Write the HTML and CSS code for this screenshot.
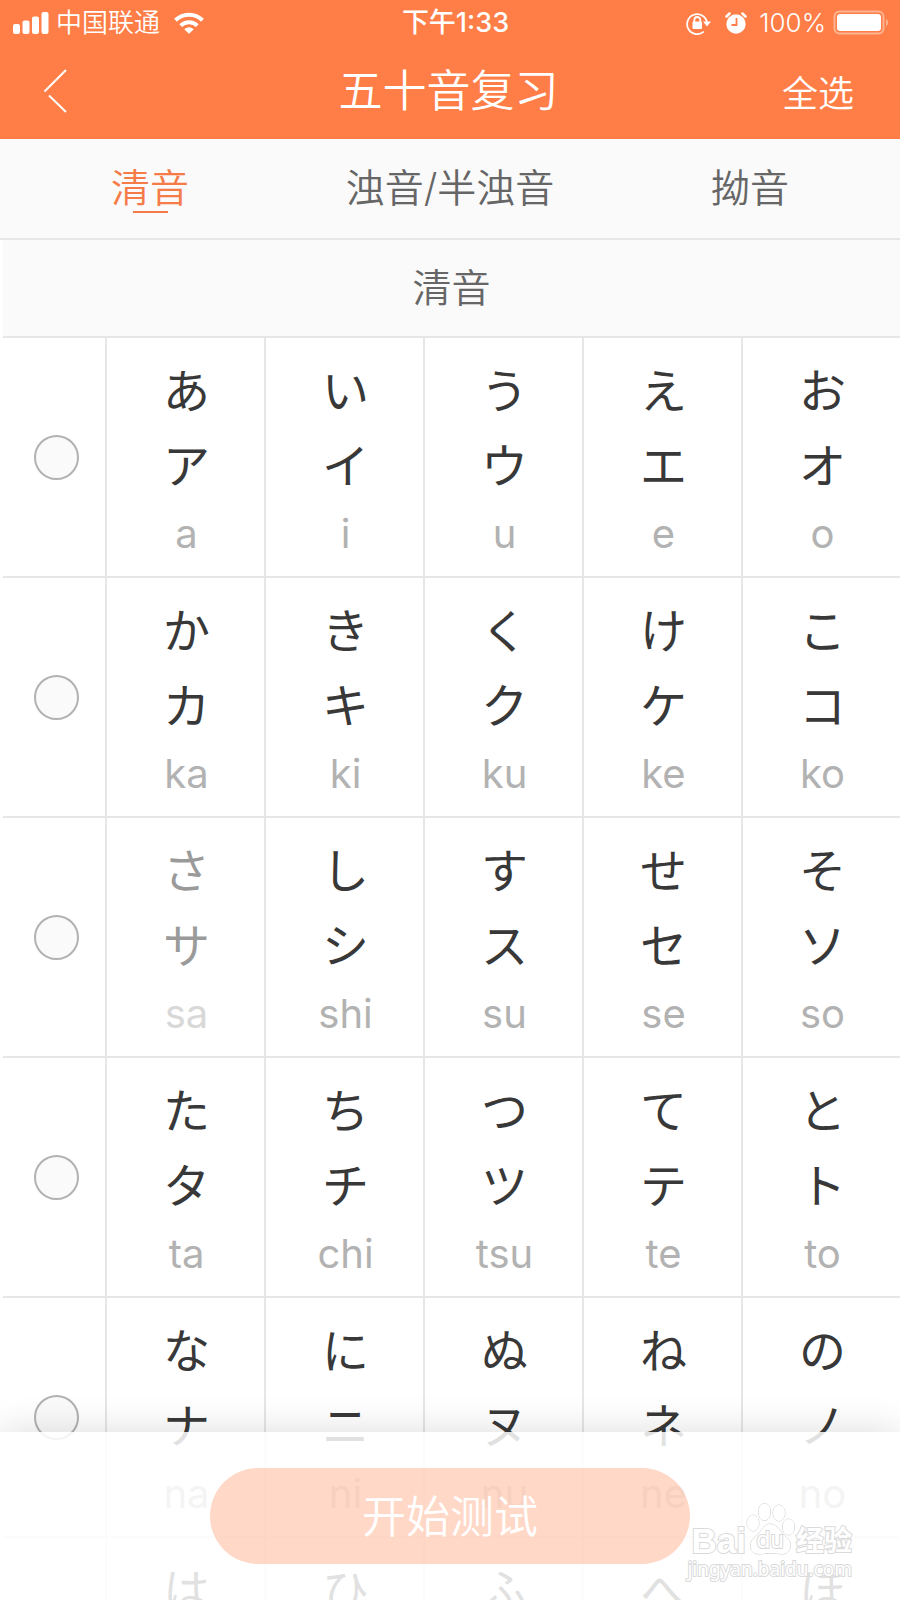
FILE: index.html
```
<!DOCTYPE html>
<html lang="zh-CN">
<head>
<meta charset="utf-8">
<meta name="viewport" content="width=device-width, initial-scale=1">
<title>五十音复习</title>
<link rel="stylesheet" href="styles.css">
</head>
<body>
<div class="screen">
  <header class="header">
    <div class="status">
      <div class="status-left">
        <svg class="icon" width="36" height="22" viewBox="0 0 36 22" fill="currentColor" aria-hidden="true">
          <rect x="0" y="12" width="7" height="10" rx="2"/><rect x="9.500" y="8.500" width="7" height="13.500" rx="2"/><rect x="19" y="4.500" width="7" height="17.500" rx="2"/><rect x="28.500" y="0" width="7" height="22" rx="2"/>
        </svg>
        <span class="carrier">中国联通</span>
        <svg class="icon wifi" width="30" height="22" viewBox="0 0 30 22" aria-hidden="true">
          <g fill="none" stroke="currentColor" stroke-width="4"><path d="M1.500 8.300a19.300 19.300 0 0 1 27 0"/><path d="M6.700 13.600a12 12 0 0 1 16.600 0"/></g>
          <path d="M15 21.800l-4.800-4.600q4.800-3.800 9.600 0z" fill="currentColor"/>
        </svg>
      </div>
      <span class="clock">下午1:33</span>
      <div class="status-right">
        <svg class="icon" width="25" height="23" viewBox="0 0 25 23" aria-hidden="true">
          <path d="M17.800 19.600A10 10 0 1 1 21 10.500" fill="none" stroke="currentColor" stroke-width="1.800"/>
          <path d="M17 9.500h8l-4 5z" fill="currentColor"/>
          <rect x="6.500" y="9.500" width="9.500" height="7.500" rx="1" fill="currentColor"/>
          <path d="M8.300 10V8a3 3 0 0 1 6 0v2" fill="none" stroke="currentColor" stroke-width="1.800"/>
        </svg>
        <svg class="icon alarm" width="22" height="22" viewBox="0 0 22 22" aria-hidden="true">
          <circle cx="11" cy="12" r="9.700" fill="currentColor"/>
          <path d="M1.500 4.500l3-3M20.500 4.500l-3-3" stroke="currentColor" stroke-width="2.500" stroke-linecap="round"/>
          <path d="M11.500 6v7H6.500" fill="none" stroke="#ff7d46" stroke-width="1.800"/>
        </svg>
        <span class="percent">100%</span>
        <svg class="icon battery" width="57" height="26" viewBox="0 0 57 26" aria-hidden="true">
          <rect x="1.500" y="1.500" width="49" height="22" rx="5" fill="none" stroke="#ffb491" stroke-width="2"/>
          <rect x="4" y="4" width="44" height="17" rx="3" fill="currentColor"/>
          <path d="M53 8.500q4 4 0 8z" fill="#ffb491"/>
        </svg>
      </div>
    </div>
    <div class="navbar">
      <button class="back" type="button" aria-label="返回">
        <svg class="icon" width="24" height="44" viewBox="0 0 24 44" fill="none" stroke="currentColor" stroke-width="2" aria-hidden="true"><path d="M23 1L1.500 22.500M6 26.500L23 43"/></svg>
      </button>
      <h1 class="title">五十音复习</h1>
      <button class="select-all" type="button">全选</button>
    </div>
  </header>

  <nav class="tabs">
    <button class="tab tab-active" type="button">清音</button>
    <button class="tab" type="button">浊音/半浊音</button>
    <button class="tab" type="button">拗音</button>
  </nav>

  <main class="content">
    <h2 class="section">清音</h2>
    <table class="kana">
      <colgroup><col class="col-check"><col><col><col><col><col></colgroup>
      <tbody>
        <tr>
          <td class="pick"><input class="check" type="checkbox" aria-label="あ行"></td>
          <td><span>あ</span><span>ア</span><small>a</small></td>
          <td><span>い</span><span>イ</span><small>i</small></td>
          <td><span>う</span><span>ウ</span><small>u</small></td>
          <td><span>え</span><span>エ</span><small>e</small></td>
          <td><span>お</span><span>オ</span><small>o</small></td>
        </tr>
        <tr>
          <td class="pick"><input class="check" type="checkbox" aria-label="か行"></td>
          <td><span>か</span><span>カ</span><small>ka</small></td>
          <td><span>き</span><span>キ</span><small>ki</small></td>
          <td><span>く</span><span>ク</span><small>ku</small></td>
          <td><span>け</span><span>ケ</span><small>ke</small></td>
          <td><span>こ</span><span>コ</span><small>ko</small></td>
        </tr>
        <tr>
          <td class="pick"><input class="check" type="checkbox" aria-label="さ行"></td>
          <td class="pressed"><span>さ</span><span>サ</span><small>sa</small></td>
          <td><span>し</span><span>シ</span><small>shi</small></td>
          <td><span>す</span><span>ス</span><small>su</small></td>
          <td><span>せ</span><span>セ</span><small>se</small></td>
          <td><span>そ</span><span>ソ</span><small>so</small></td>
        </tr>
        <tr>
          <td class="pick"><input class="check" type="checkbox" aria-label="た行"></td>
          <td><span>た</span><span>タ</span><small>ta</small></td>
          <td><span>ち</span><span>チ</span><small>chi</small></td>
          <td><span>つ</span><span>ツ</span><small>tsu</small></td>
          <td><span>て</span><span>テ</span><small>te</small></td>
          <td><span>と</span><span>ト</span><small>to</small></td>
        </tr>
        <tr>
          <td class="pick"><input class="check" type="checkbox" aria-label="な行"></td>
          <td><span>な</span><span>ナ</span><small>na</small></td>
          <td><span>に</span><span>ニ</span><small>ni</small></td>
          <td><span>ぬ</span><span>ヌ</span><small>nu</small></td>
          <td><span>ね</span><span>ネ</span><small>ne</small></td>
          <td><span>の</span><span>ノ</span><small>no</small></td>
        </tr>
        <tr>
          <td class="pick"><input class="check" type="checkbox" aria-label="は行"></td>
          <td><span>は</span></td>
          <td><span>ひ</span></td>
          <td><span>ふ</span></td>
          <td><span>へ</span></td>
          <td><span>ほ</span></td>
        </tr>
      </tbody>
    </table>
  </main>

  <footer class="footer">
    <button class="start" type="button">开始测试</button>
  </footer>

  <div class="watermark">
    <div class="brand">
      <span class="brand-bai">Bai</span>
      <span class="paw">
        <svg class="icon" width="50" height="53" viewBox="0 0 50 53" fill="#fff" stroke="#cacaca" stroke-width="1" aria-hidden="true">
          <ellipse cx="7" cy="21" rx="6" ry="8"/><ellipse cx="18.500" cy="10" rx="6" ry="8.500"/><ellipse cx="33" cy="11" rx="6" ry="8"/><ellipse cx="42.500" cy="25" rx="6" ry="8"/>
          <path d="M24 22c6 0 9 5 13 10 4 4 8 7 7.500 12-.5 5-4 8-9 8-4 0-7-1-11-1s-7 1-11 1c-6 0-9-3-9-8 0-6 4-8 8-12 4-5 6-10 11.500-10z"/>
        </svg>
        <span class="paw-text">du</span>
      </span>
      <span class="brand-cn">经验</span>
    </div>
    <span class="url">jingyan.baidu.com</span>
  </div>
</div>
</body>
</html>
```
FILE: styles.css
```
* { box-sizing: border-box; }

body {
  margin: 0;
  background: #fff;
  color: #383838;
  font-family: Inter, "Noto Sans CJK SC", sans-serif;
}

button {
  margin: 0;
  padding: 0;
  border: 0;
  background: none;
  color: inherit;
  font: inherit;
}

.icon { display: block; flex: none; }

.screen {
  position: relative;
  height: 100vh;
  overflow: hidden;
}

.header {
  padding-top: 1px;
  background: #ff7d46;
  color: #fff;
}

.status {
  display: grid;
  grid-template-columns: 1fr auto 1fr;
  align-items: center;
  height: 44px;
  padding: 0 10px 0 13px;
  font-size: 26px;
  line-height: 44px;
}

.status-left,
.status-right {
  display: flex;
  align-items: center;
}

.status-right { justify-content: flex-end; }

.carrier { margin-left: 7px; font-weight: 350; }
.wifi { margin-left: 14px; }
.clock { font-size: 27px; font-weight: 500; margin-right: -8px; }
.alarm { margin: 0 12px 0 14px; }
.percent { font-weight: 300; }
.battery { margin-left: 7px; }

.navbar {
  display: grid;
  grid-template-columns: 1fr auto 1fr;
  align-items: center;
  height: 94px;
  padding: 0 46px 2px 43px;
}

.back { justify-self: start; }

.title {
  margin: 0;
  font-size: 44px;
  font-weight: 350;
  line-height: 92px;
}

.select-all {
  justify-self: end;
  font-size: 36px;
  font-weight: 350;
}

.tabs {
  display: grid;
  grid-template-columns: repeat(3, 1fr);
  height: 101px;
  border-bottom: 2px solid #e6e6e6;
  background: #fafafa;
  color: #666;
}

.tab {
  display: flex;
  flex-direction: column;
  align-items: center;
  justify-content: flex-start;
  padding-top: 26px;
  font-size: 39px;
  font-weight: 350;
  line-height: 46px;
}

.tab-active { color: #f57c49; }

.tab-active::after {
  content: "";
  width: 35px;
  height: 2px;
  background: currentColor;
}

.content { padding-left: 3px; }

.section {
  margin: 0;
  border-bottom: 2px solid #e6e6e6;
  background: #fafafa;
  color: #666;
  font-size: 39px;
  font-weight: 350;
  line-height: 96px;
  text-align: center;
}

.kana {
  width: 100%;
  table-layout: fixed;
  border-collapse: separate;
  border-spacing: 0;
  font-family: Inter, "Noto Sans CJK JP", sans-serif;
}

.col-check { width: 102px; }

.kana td {
  height: 240px;
  padding: 15px 0 11px 2px;
  border-bottom: 2px solid #e6e6e6;
  border-left: 2px solid #e6e6e6;
  text-align: center;
  vertical-align: top;
}

.kana td.pick {
  padding: 0 0 0 4px;
  border-left: 0;
  vertical-align: middle;
}

.kana span {
  display: block;
  font-size: 47px;
  line-height: 75px;
}

.kana small {
  display: block;
  color: #b2b2b2;
  font-size: 40px;
  line-height: 62px;
}

.pressed > * { opacity: 0.5; }

.check {
  appearance: none;
  display: block;
  width: 45px;
  height: 45px;
  margin: 0 auto;
  border: 2px solid #b2b2b2;
  border-radius: 50%;
  background: #fafafa;
}

.footer {
  position: absolute;
  right: 0;
  bottom: 0;
  left: 0;
  display: flex;
  justify-content: center;
  padding: 36px 0;
  background: rgba(255, 255, 255, 0.85);
  box-shadow: 0 0 36px rgba(0, 0, 0, 0.14);
}

.start {
  width: 480px;
  height: 96px;
  padding-bottom: 4px;
  border-radius: 48px;
  background: rgba(255, 125, 70, 0.3);
  color: #fff;
  font-size: 44px;
  font-weight: 350;
}

.watermark {
  position: absolute;
  right: 48px;
  bottom: 17px;
  display: flex;
  flex-direction: column;
  color: #fff;
  -webkit-text-stroke: 2px #dadada;
  paint-order: stroke fill;
}

.brand {
  display: flex;
  align-items: flex-end;
  justify-content: flex-end;
  line-height: 28px;
}

.brand-bai {
  font-family: "Liberation Sans", sans-serif;
  font-size: 35px;
  font-weight: 700;
}

.paw { position: relative; }

.paw-text {
  position: absolute;
  right: 2px;
  bottom: 3px;
  left: 0;
  font-size: 23px;
  line-height: 24px;
  text-align: center;
}

.brand-cn {
  font-size: 28px;
  font-weight: 700;
}

.url {
  font-family: "Noto Sans", sans-serif;
  font-size: 19px;
  line-height: 28px;
}
```
